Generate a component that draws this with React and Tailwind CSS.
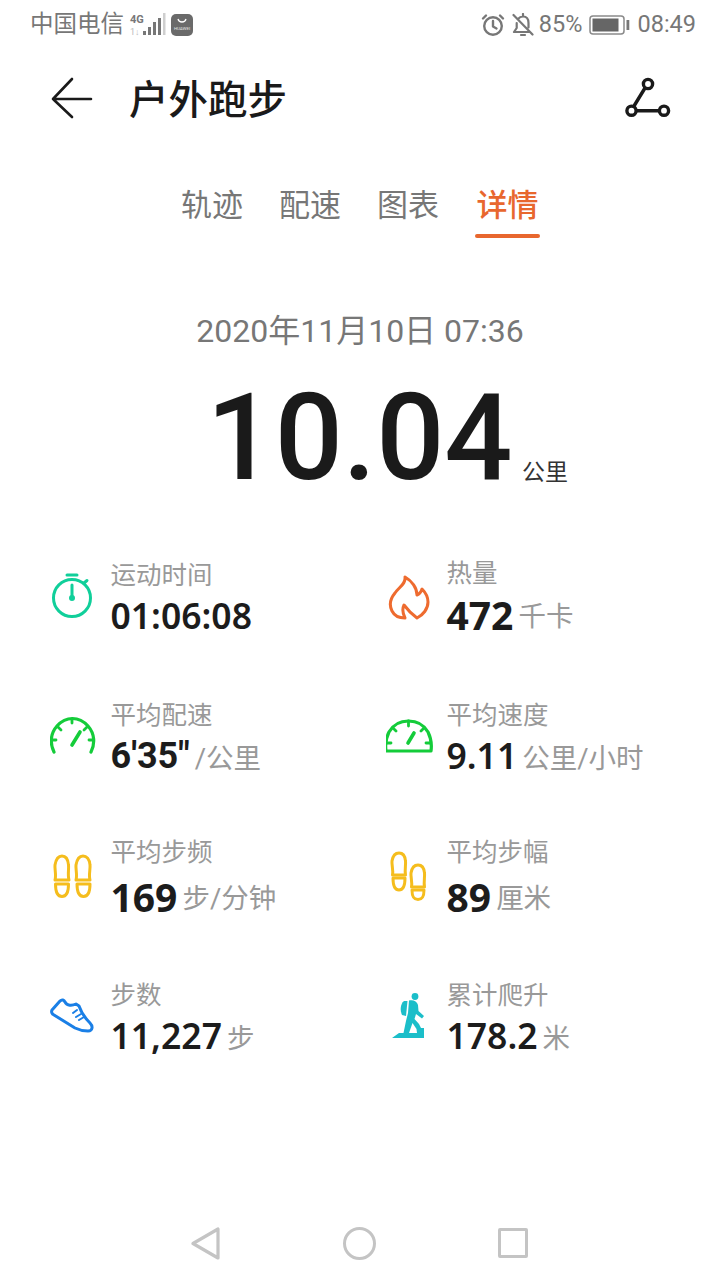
import React from "react";

const F = "font-['Roboto','Noto_Sans_CJK_SC',sans-serif]";

function Back() {
  return (
    <svg className="w-[44px] h-[44px] shrink-0" viewBox="50 77 44 44" fill="none" stroke="#1a1a1a" strokeWidth="2.6" strokeLinecap="round" strokeLinejoin="round">
      <path d="M53 99H91M72 79L53 99L72 117" />
    </svg>
  );
}

function Route() {
  return (
    <svg className="w-[48px] h-[48px]" viewBox="625 75 48 48" fill="none" stroke="#1a1a1a" strokeWidth="3.4">
      <path d="M634 106L645 88M636 110.7H659" />
      <circle cx="648" cy="84" r="4.6" />
      <circle cx="631.5" cy="110.7" r="4.6" />
      <circle cx="664" cy="110.7" r="4.6" />
    </svg>
  );
}

function IconBox({ vb, children, fill = "none", stroke, sw = 3 }) {
  return (
    <svg className="w-[61px] h-[80px] shrink-0 mr-[-0.5px]" viewBox={vb} fill={fill} stroke={stroke} strokeWidth={sw} strokeLinecap="round" strokeLinejoin="round">
      {children}
    </svg>
  );
}

const icons = {
  watch: (
    <IconBox vb="50 558 61 80" stroke="#10cf9a">
      <circle cx="72" cy="599" r="18.5" />
      <path d="M67 576H77M84 584L87 581.5M72 586V598" />
      <circle cx="72" cy="599" r="1.5" fill="#10cf9a" />
    </IconBox>
  ),
  flame: (
    <IconBox vb="386 556 61 80" stroke="#ee6b2f">
      <path d="M405 576C406 583 399 586 395 592C390 598 389 604 392 610C394 614 399 617 405 617C403 613 402 608 404 604C407 608 410 612 417 617C423 614 428 608 428 601C428 595 425 591 422 588C421 591 420 593 417 594C417 587 412 580 405 576Z" />
    </IconBox>
  ),
  gaugeL: (
    <IconBox vb="50 698 61 80" stroke="#14cc3a" sw={3.2}>
      <path d="M54 753C50 745 50 735 57 727C66 717 79 717 88 727C95 735 95 745 91 753" />
      <path d="M72 720V724M58 728L61 731M87 728L84 731M52 741H56M89 741H93" strokeWidth="2.8" />
      <path d="M80 733L72 746" strokeWidth="3.6" />
    </IconBox>
  ),
  gaugeR: (
    <IconBox vb="386 698 61 80" stroke="#14cc3a" sw={3.2}>
      <path d="M386 752H431C432 745 431 739 428 733C424 726 417 722 408.5 722C400 722 393 726 389 733C386 739 385 745 386 752Z" />
      <path d="M408.5 722V727M393 729L396 732M424 729L421 732M387 744H391M426 744H430" strokeWidth="2.8" />
      <path d="M414 734L408 744" strokeWidth="3.6" />
    </IconBox>
  ),
  feetL: (
    <IconBox vb="50 835 61 80" stroke="#f5bd1d">
      <path d="M55 881C56.5 876 54.5 870 55 866C56 860 58.5 857 62 857C65.5 857 68 860 68.5 866C69 870 67.5 876 69 881Z" />
      <path d="M55.5 885H68.5C68.5 892 67 897.5 62 897.5C57 897.5 55.5 892 55.5 885Z" />
      <path d="M76 881C77.5 876 75.5 870 76 866C77 860 79.5 857 83 857C86.5 857 89.5 860 90 866C90.5 870 88.5 876 90 881Z" />
      <path d="M77 885H90C90 892 88.5 897.5 83.5 897.5C78.5 897.5 77 892 77 885Z" />
    </IconBox>
  ),
  feetR: (
    <IconBox vb="386 835 61 80" stroke="#f5bd1d">
      <path d="M392.5 876C393.5 871 391.5 866 392 862C393 856 395.5 854 399 854C402.5 854 405 856 405.5 862C406 866 404.5 871 405.5 876Z" />
      <path d="M393 879H405C405 886 404 891 399 891C394 891 393 886 393 879Z" />
      <path d="M411.5 888C412.5 883 410.5 878 411 874C412 868 414.5 866 418 866C421.5 866 424 868 424.5 874C425 878 423.5 883 424.5 888Z" />
      <path d="M412 891H424C424 897 423 900.5 418 900.5C413 900.5 412 897 412 891Z" />
    </IconBox>
  ),
  shoe: (
    <IconBox vb="50 978 61 80" stroke="#1a7fe6">
      <path d="M52 1011L60 1002C62 1000 64 1001 65 1003C67 1007 72 1007 76 1005L79 1007C81 1013 85 1019 90 1024C93 1027 93 1032 88 1032C83 1032 79 1031 75 1029L54 1016C52 1015 51 1013 52 1011Z" />
      <path d="M73 1014L77 1011M76 1018L81 1015M79 1021L84 1018" strokeWidth="2" />
    </IconBox>
  ),
  hiker: (
    <IconBox vb="386 978 61 80" stroke="none" fill="#1bbec9" sw={0}>
      <circle cx="415" cy="997.5" r="3.4" />
      <path d="M409 1001.5C413 1000.5 417 1002 418 1006L418.5 1012L424 1017L422 1019.5L416 1015L414.5 1020L419 1025L421 1029H424V1039H392L399 1034H403.5L406 1022L408 1014Z" />
      <path d="M404 1002L407.5 1002L406 1017L402 1016C400 1012 400 1005 404 1002Z" />
      <path d="M409 1034L412.5 1024L416.5 1030L417 1034Z" fill="#ffffff" />
    </IconBox>
  ),
};

function Stat({ icon, label, value, unit, size = "normal", labelH = "h-[34px]", valueH = "h-[50px]" }) {
  const valueClass =
    size === "big"
      ? "font-['Noto_Sans'] text-[39px] leading-none font-bold text-[#1c1c1c]"
      : size === "pace"
        ? "text-[36px] leading-none font-bold text-[#1c1c1c]"
        : "font-['Noto_Sans'] text-[35.5px] leading-none font-semibold text-[#1c1c1c]";
  return (
    <div className="flex items-start">
      {icons[icon]}
      <div className="flex flex-col">
        <div className={`${labelH} pt-[4px] flex items-center text-[25.5px] leading-none text-[#999999]`}>{label}</div>
        <div className={`${valueH} flex items-center whitespace-nowrap`}>
          <span className={valueClass}>{value}</span>
          <span className="text-[27.5px] leading-none text-[#999999] ml-[5px] mt-[5px]">{unit}</span>
        </div>
      </div>
    </div>
  );
}

export default function App() {
  return (
    <div className={`${F} relative w-[720px] h-[1280px] bg-white flex flex-col overflow-hidden`}>
      <div className="h-[50px] flex items-center justify-between pl-[30px] pr-[24px] text-[#777777]">
        <div className="flex items-center">
          <span className="text-[23.5px] leading-none">中国电信</span>
          <svg className="w-[38px] h-[26px] ml-[5px]" viewBox="127 12 38 26" fill="#777777">
            <text x="128" y="23" fontSize="11" fontWeight="700" fontFamily="Roboto">4G</text>
            <text x="128" y="35" fontSize="9" fill="#bbbbbb" fontFamily="Roboto">1↓</text>
            <rect x="141" y="31" width="3" height="4" />
            <rect x="146" y="27" width="3" height="8" />
            <rect x="151" y="22" width="3" height="13" />
            <rect x="156" y="18" width="3" height="17" />
            <rect x="161" y="13" width="2.5" height="22" fill="#cfcfcf" />
          </svg>
          <svg className="w-[22px] h-[22px] ml-[4px]" viewBox="0 0 22 22">
            <rect width="22" height="22" rx="5" fill="#6a6a6a" />
            <path d="M7 5C8 9 14 9 15 5" fill="none" stroke="#fff" strokeWidth="1.3" />
            <text x="11" y="16" fontSize="4.4" fill="#e4e4e4" textAnchor="middle" fontFamily="Roboto">HUAWEI</text>
          </svg>
        </div>
        <div className="flex items-center">
          <svg className="w-[24px] h-[24px]" viewBox="0 0 24 24" fill="none" stroke="#777777" strokeWidth="2.4" strokeLinecap="round" strokeLinejoin="round">
            <circle cx="12" cy="13" r="8.8" />
            <path d="M12 8V13.5L15.5 15.5M2 5.5L5 2.5M22 5.5L19 2.5" />
          </svg>
          <svg className="w-[22px] h-[24px] ml-[7px]" viewBox="0 0 22 24" fill="none" stroke="#777777" strokeWidth="2.2" strokeLinecap="round" strokeLinejoin="round">
            <path d="M6 6C8 3.5 9 3.5 11 3.5C14.5 3.5 16.5 6 16.5 10V14.5M4.7 10V15L2 19H18M9 22H13M1.5 2L20.5 21.5M11 1V3.5" />
          </svg>
          <span className="text-[23.5px] leading-none ml-[5px]">85%</span>
          <svg className="w-[41px] h-[22px] ml-[7px]" viewBox="0 0 41 22">
            <rect x="1" y="2" width="34" height="18" rx="3" fill="none" stroke="#8a8a8a" strokeWidth="1.5" />
            <rect x="3.5" y="4.5" width="26" height="13" fill="#666666" />
            <rect x="37.5" y="6" width="2.8" height="10" fill="#777777" />
          </svg>
          <span className="text-[23.5px] leading-none ml-[7px]">08:49</span>
        </div>
      </div>

      <div className="h-[98px] flex items-center pl-[50px] pr-[47px]">
        <Back />
        <h1 className="text-[39.5px] leading-none font-medium text-[#1a1a1a] ml-[35px] mt-[3px]">户外跑步</h1>
        <div className="ml-auto"><Route /></div>
      </div>

      <div className="flex justify-center gap-[36px] mt-[31px] pl-[1px] text-[31px] leading-none text-[#777777]">
        <div className="h-[60px] pt-[11px]">轨迹</div>
        <div className="h-[60px] pt-[11px]">配速</div>
        <div className="h-[60px] pt-[11px]">图表</div>
        <div className="h-[60px] pt-[11px] flex flex-col items-center text-[#e8672e] font-medium">
          <span className="h-[31px] shrink-0">详情</span>
          <div className="w-[65px] h-[4px] shrink-0 rounded-full bg-[#e8672e] mt-[13px]"></div>
        </div>
      </div>

      <div className="text-center text-[32px] leading-none text-[#777777] mt-[76px]">2020年11月10日 07:36</div>

      <div className="relative mt-[25px] h-[132px] flex justify-center items-center">
        <span className="text-[120px] leading-none font-medium text-[#1a1a1a] ml-[-1px]">10.04</span>
        <span className="absolute left-[522px] top-[89px] text-[23px] leading-none text-[#333333]">公里</span>
      </div>

      <div className="pl-[50px] mt-[53px] grid grid-cols-[336px_1fr] grid-rows-[140px_137px_143px_80px]">
        <Stat icon="watch" label="运动时间" value="01:06:08" unit="" />
        <Stat icon="flame" label="热量" value="472" unit="千卡" size="big" labelH="h-[30px]" valueH="h-[54px]" />
        <Stat icon="gaugeL" label="平均配速" value={"6'35\""} unit="/公里" size="pace" />
        <Stat icon="gaugeR" label="平均速度" value="9.11" unit="公里/小时" />
        <Stat icon="feetL" label="平均步频" value="169" unit="步/分钟" size="big" valueH="h-[56px]" />
        <Stat icon="feetR" label="平均步幅" value="89" unit="厘米" size="big" valueH="h-[56px]" />
        <Stat icon="shoe" label="步数" value="11,227" unit="步" />
        <Stat icon="hiker" label="累计爬升" value="178.2" unit="米" />
      </div>

      <div className="mt-auto h-[53px] flex items-start pl-[191px]">
        <svg className="w-[29px] h-[33px]" viewBox="191 1226 29 33" fill="none" stroke="#c4c4c4" strokeWidth="3.2" strokeLinejoin="round">
          <path d="M218 1228V1257L193 1242.5Z" />
        </svg>
        <svg className="w-[33px] h-[33px] ml-[123px]" viewBox="0 0 33 33" fill="none" stroke="#c4c4c4" strokeWidth="3">
          <circle cx="16.5" cy="16.5" r="15" />
        </svg>
        <div className="w-[30px] h-[30px] mt-[1px] ml-[122px] rounded-[2px] border-[3px] border-[#c4c4c4]"></div>
      </div>
    </div>
  );
}
